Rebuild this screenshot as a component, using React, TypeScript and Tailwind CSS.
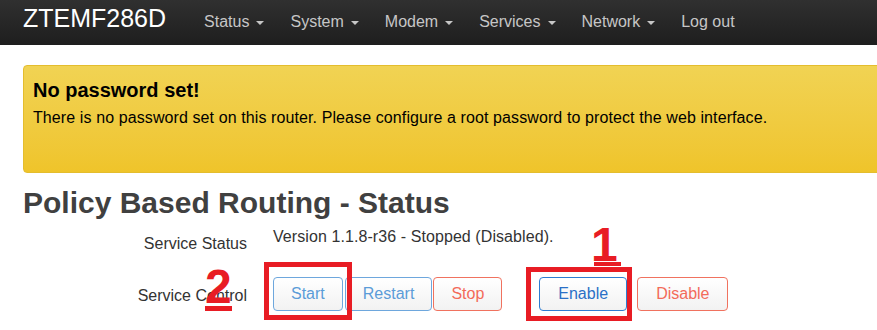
const navItems = [
  { label: "Status", caret: true },
  { label: "System", caret: true },
  { label: "Modem", caret: true },
  { label: "Services", caret: true },
  { label: "Network", caret: true },
  { label: "Log out", caret: false },
];

const Caret = () => (
  <span className="ml-[7px] inline-block h-0 w-0 border-l-[4px] border-r-[4px] border-t-[4px] border-l-transparent border-r-transparent border-t-current align-middle" />
);

const btnBase =
  "h-[34px] rounded-[4px] border bg-gradient-to-b from-white to-[#f2f2f2] py-[6px] text-[16px] leading-[20px]";

const App = () => {
  return (
    <div className="relative min-h-[330px] w-full overflow-hidden bg-white font-['Liberation_Sans',Arial,sans-serif]">
      {/* Navbar */}
      <div className="flex h-[45px] items-baseline bg-gradient-to-b from-[#303030] to-[#1e1e1e] pl-[23px] pt-[4px]">
        <span className="text-[25px] leading-[28px] text-white">ZTEMF286D</span>
        <div className="ml-[38px] flex items-baseline gap-[26px]">
          {navItems.map((item) => (
            <span key={item.label} className="text-[16px] leading-[20px] text-[#c6c6c6]">
              {item.label}
              {item.caret && <Caret />}
            </span>
          ))}
        </div>
      </div>

      {/* Alert */}
      <div className="ml-[23px] mt-[20px] h-[108px] w-[900px] rounded-[4px] border border-[#e4bd2e] bg-gradient-to-b from-[#f1d353] to-[#efc42a] px-[9px] pt-[13px] text-black">
        <h4 className="text-[20px] font-bold leading-[22px]">No password set!</h4>
        <p className="mt-[7px] text-[16px] leading-[20px] tracking-[0.1px]">
          There is no password set on this router. Please configure a root password to protect the web interface.
        </p>
      </div>

      {/* Heading */}
      <h2 className="ml-[23px] mt-[13px] text-[30px] font-bold leading-[33px] text-[#404040]">
        Policy Based Routing - Status
      </h2>

      {/* Service status */}
      <div className="ml-[23px] mt-[8px] flex items-start gap-[26px]">
        <div className="w-[224px] pt-[7px] text-right text-[16px] leading-[20px] text-[#333]">Service Status</div>
        <div className="text-[16px] leading-[20px] tracking-[0.08px] text-[#333]">Version 1.1.8-r36 - Stopped (Disabled).</div>
      </div>

      {/* Service control */}
      <div className="ml-[23px] mt-[23px] flex items-start gap-[26px]">
        <div className="w-[224px] pt-[9px] text-right text-[16px] leading-[20px] text-[#333]">Service Control</div>
        <div className="flex items-start">
          <div className="relative">
            <button className={`${btnBase} px-[17px] border-[#6ea7dd] text-[#5b9cd8]`}>Start</button>
            <div className="absolute bottom-[-9px] left-[-9px] right-[-9px] top-[-15px] border-[5px] border-[#e81c24]" />
          </div>
          <button className={`${btnBase} ml-[2px] px-[17px] border-[#6ea7dd] text-[#5b9cd8]`}>Restart</button>
          <button className={`${btnBase} ml-[1px] px-[17px] border-[#f0725f] text-[#f36b5a]`}>Stop</button>
          <div className="relative ml-[37px]">
            <button className={`${btnBase} px-[18px] border-[#2c7dd2] text-[#2a70c6]`}>Enable</button>
            <div className="absolute bottom-[-10px] left-[-13px] right-[-5px] top-[-10px] border-[5px] border-[#e81c24]" />
          </div>
          <button className={`${btnBase} ml-[10px] px-[18px] border-[#f0725f] text-[#f36b5a]`}>Disable</button>
        </div>
      </div>

      {/* Annotations */}
      <span className="absolute left-[591px] top-[221px] text-[48px] font-bold leading-[48px] text-[#e81c24]">1</span>
      <div className="absolute left-[594px] top-[262px] h-[4px] w-[27px] bg-[#e81c24]" />
      <span className="absolute left-[205px] top-[263px] text-[48px] font-bold leading-[48px] text-[#e81c24]">2</span>
      <div className="absolute left-[205px] top-[306px] h-[5px] w-[27px] bg-[#e81c24]" />
    </div>
  );
};

export default App;
